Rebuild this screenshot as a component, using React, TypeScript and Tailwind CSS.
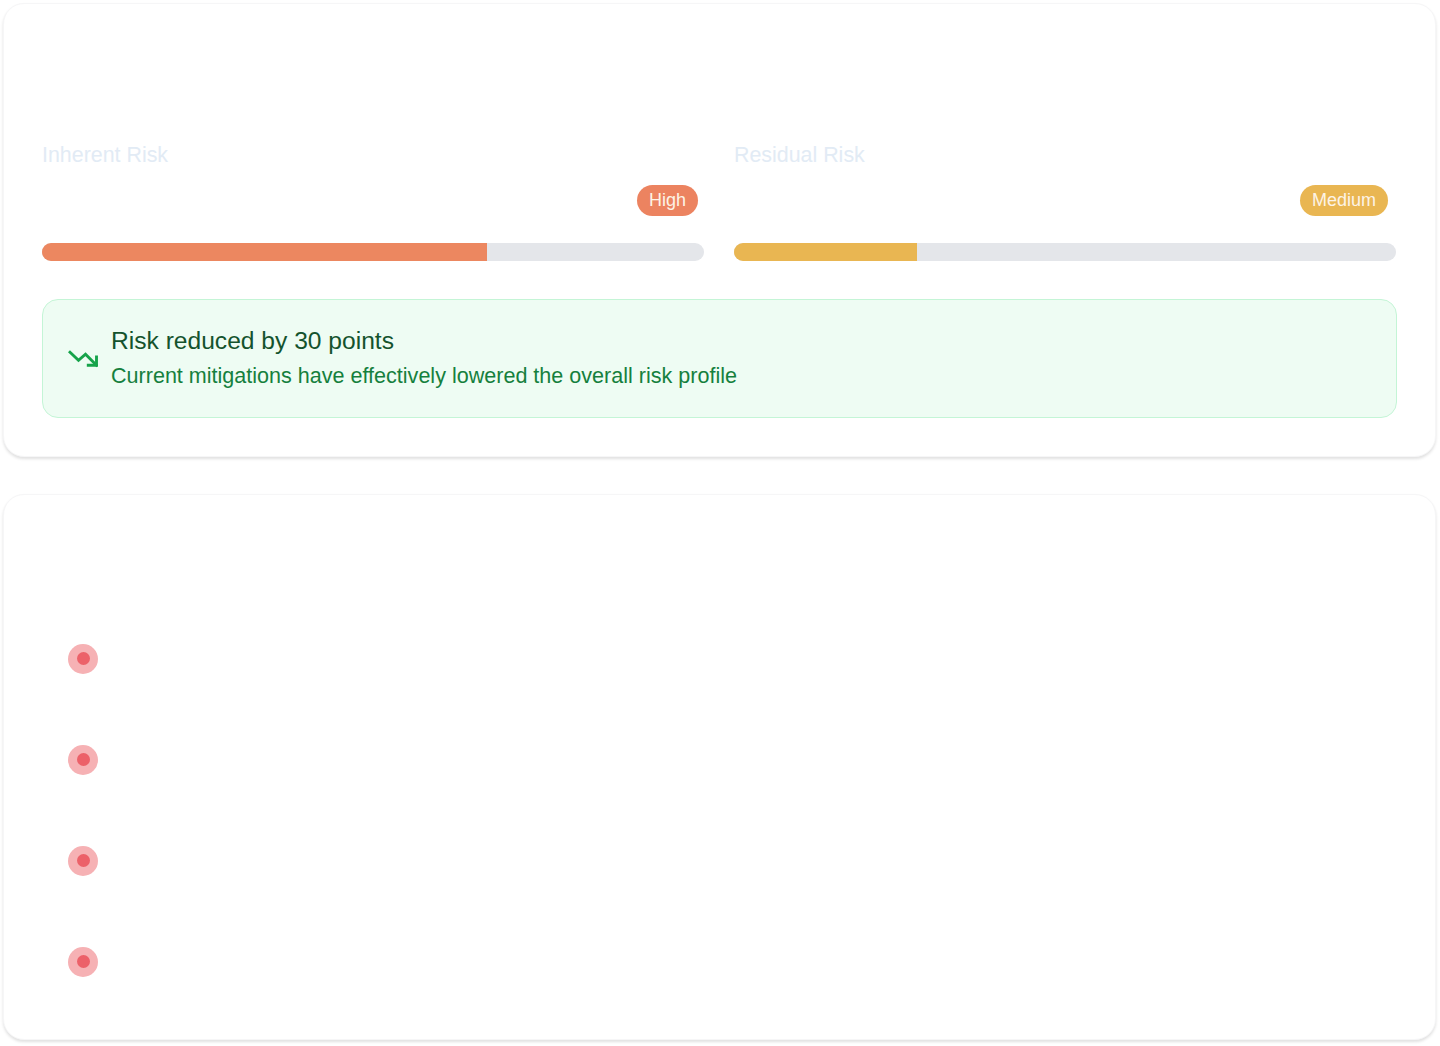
function Bar({ label, badge, badgeClass, barClass, pct, mr }: { label: string; badge: string; badgeClass: string; barClass: string; pct: number; mr: string }) {
  return (
    <div className="flex flex-col">
      <div className="h-[24px] text-[21.4px] leading-[24px] text-[#e2ebf5]">{label}</div>
      <div className={`mt-[18px] flex justify-end ${mr}`}>
        <span className={`flex h-[31px] items-center rounded-full px-[12px] text-[18px] text-[#fdf3e6] ${badgeClass}`}>{badge}</span>
      </div>
      <div className="mt-[27px] h-[18px] overflow-hidden rounded-full bg-[#e4e6ea]">
        <div className={`h-full ${barClass}`} style={{ width: `${pct}%` }} />
      </div>
    </div>
  );
}

function Dot() {
  return (
    <div className="flex h-[30px] w-[30px] items-center justify-center rounded-full bg-[#f6b1b4]">
      <div className="h-[13px] w-[13px] rounded-full bg-[#ec6169]" />
    </div>
  );
}

export default function App() {
  return (
    <div className="flex h-[1046px] flex-col gap-[37px] bg-white pb-[6px] pl-[3px] pr-[4px] pt-[3px] font-['Liberation_Sans',Arial,sans-serif]">
      <section className="h-[454px] rounded-[21px] border border-[#f6f6f7] bg-white px-[38px] pt-[139px] shadow-[0_2px_3px_rgba(0,0,0,0.12)]">
        <div className="grid grid-cols-2 gap-[30px] pr-[1px]">
          <Bar label="Inherent Risk" badge="High" badgeClass="bg-[#ec8360]" barClass="bg-[#ec8760]" pct={67.2} mr="mr-[6px]" />
          <Bar label="Residual Risk" badge="Medium" badgeClass="bg-[#e9b652]" barClass="bg-[#e9b652]" pct={27.7} mr="mr-[8px]" />
        </div>
        <div className="mt-[38px] flex h-[119px] items-center rounded-[16px] border border-[#c4f5d6] bg-[#eefcf3] pl-[25px]">
          <svg className="h-[30px] w-[30px] shrink-0" viewBox="0 0 24 24" fill="none" stroke="#16a34a" strokeWidth="2.3" strokeLinecap="square" strokeLinejoin="miter">
            <path d="M1.6 6.6 L8.4 13 L14 8.2 L22.8 17" />
            <path d="M22.8 10.4 V17 H16.2" />
          </svg>
          <div className="ml-[13px] flex flex-col">
            <div className="text-[24.6px] leading-[32px] text-[#14532d]">Risk reduced by 30 points</div>
            <div className="mt-[3px] text-[21.55px] leading-[32px] text-[#15803d]">Current mitigations have effectively lowered the overall risk profile</div>
          </div>
        </div>
      </section>
      <section className="flex h-[547px] flex-col gap-[71px] rounded-[21px] border border-[#f6f6f7] bg-white pl-[64px] pt-[149px] shadow-[0_2px_3px_rgba(0,0,0,0.12)]">
        <Dot />
        <Dot />
        <Dot />
        <Dot />
      </section>
    </div>
  );
}
